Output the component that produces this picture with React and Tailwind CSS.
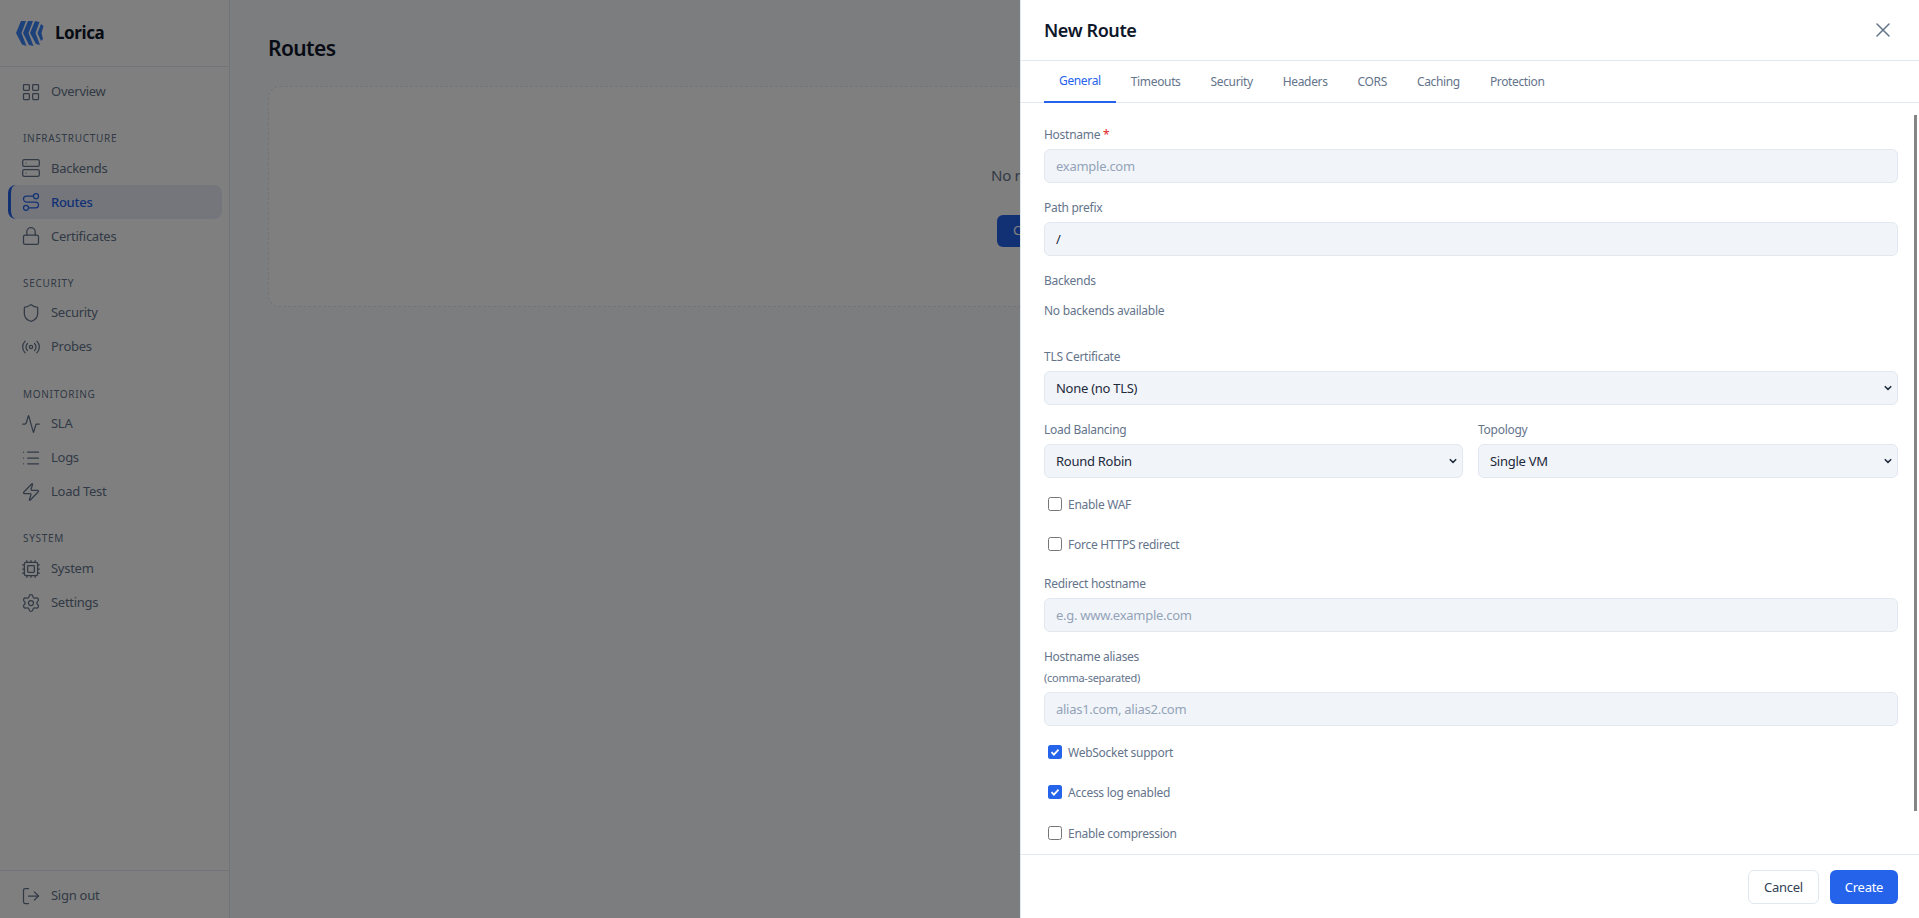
import React from "react";
import { LayoutGrid, Server, Route, Lock, Shield, Radio, Activity, List, Zap, Cpu, Settings, LogOut, X } from "lucide-react";

const F = "font-['Noto_Sans','Open_Sans',sans-serif] tracking-[-0.27px]";

function Logo() {
  return (
    <svg width="28" height="28" viewBox="0 0 28 28" className="shrink-0">
      <g fill="#3b82f6">
        <path d="M5 2L10 2L5.5 14L10.5 27L6 25.5L0 14Z" />
        <path d="M12 2L17 2L12.5 14L17.5 27L13 26L7 14Z" />
        <path d="M19 2L23.5 3L19.5 14L24 26L20 25L14 14Z" />
        <path d="M25 5L27.5 7L25.5 14L27 20L25 22L21.5 14Z" />
      </g>
    </svg>
  );
}

function NavItem({ icon: Icon, label, active }) {
  return (
    <div className={active
      ? "flex h-[34px] items-center gap-[10px] rounded-lg border-l-[3px] border-[#2563eb] bg-[#e8ecf8] pl-[10px] text-[13px] font-medium text-[#2563eb]"
      : "flex h-[34px] items-center gap-[10px] rounded-lg pl-[13px] text-[13px] text-[#64748b]"}>
      <Icon size={20} strokeWidth={1.5} />
      <span>{label}</span>
    </div>
  );
}

function Section({ title, children }) {
  return (
    <div className="mt-[21px]">
      <div className="mb-[3.75px] flex h-[18px] items-center pl-[15px] text-[10px] tracking-[0.07em] text-[#64748b]">{title}</div>
      {children}
    </div>
  );
}

function Label({ children }) {
  return <div className="mb-[5px] h-[18px] text-[12px] leading-[18px] text-[#64748b]">{children}</div>;
}

function TextInput({ placeholder, value }) {
  return (
    <div className={"flex h-[34px] items-center rounded-md border border-[#e2e8f0] bg-[#f1f5f9] pl-[11px] pt-[2px] text-[13px] " + (value ? "text-[#1e293b]" : "text-[#94a3b8]")}>
      {value || placeholder}
    </div>
  );
}

function Select({ value }) {
  return (
    <div className="flex h-[34px] items-center justify-between rounded-md border border-[#e2e8f0] bg-[#f1f5f9] pl-[11px] pr-[5px] text-[13px] text-[#1e293b]">
      <span className="pt-[1px]">{value}</span>
      <svg width="8" height="6" viewBox="0 0 8 6">
        <path d="M0.8 1.2l3.2 3.2 3.2-3.2" fill="none" stroke="#1e293b" strokeWidth="1.5" />
      </svg>
    </div>
  );
}

function Check({ label, checked }) {
  return (
    <div className="flex h-[18px] items-center pl-[4px] text-[12px] text-[#64748b]">
      {checked ? (
        <span className="-mt-[3px] mr-[6px] flex h-[14px] w-[14px] items-center justify-center rounded-[2.5px] bg-[#2563eb]">
          <svg width="10" height="10" viewBox="0 0 10 10"><path d="M1.5 5.2l2.4 2.4 4.6-5" fill="none" stroke="#fff" strokeWidth="1.8" /></svg>
        </span>
      ) : (
        <span className="-mt-[3px] mr-[6px] h-[14px] w-[14px] rounded-[2.5px] border border-[#767676] bg-white" />
      )}
      <span>{label}</span>
    </div>
  );
}

const tabs = ["General", "Timeouts", "Security", "Headers", "CORS", "Caching", "Protection"];

export default function App() {
  return (
    <div className={"relative flex h-screen overflow-hidden bg-[#f8fafc] " + F}>
      <aside className="flex w-[230px] shrink-0 flex-col border-r border-[#e2e8f0] bg-white">
        <div className="flex h-[67px] shrink-0 items-center gap-[11px] border-b border-[#e2e8f0] pl-[16px]">
          <Logo />
          <span className="text-[17px] font-bold tracking-[-0.4px] text-[#0f172a]">Lorica</span>
        </div>
        <nav className="flex-1 pl-[8px] pr-[7px] pt-[7.5px]">
          <NavItem icon={LayoutGrid} label="Overview" />
          <Section title="INFRASTRUCTURE">
            <NavItem icon={Server} label="Backends" />
            <NavItem icon={Route} label="Routes" active />
            <NavItem icon={Lock} label="Certificates" />
          </Section>
          <Section title="SECURITY">
            <NavItem icon={Shield} label="Security" />
            <NavItem icon={Radio} label="Probes" />
          </Section>
          <Section title="MONITORING">
            <NavItem icon={Activity} label="SLA" />
            <NavItem icon={List} label="Logs" />
            <NavItem icon={Zap} label="Load Test" />
          </Section>
          <Section title="SYSTEM">
            <NavItem icon={Cpu} label="System" />
            <NavItem icon={Settings} label="Settings" />
          </Section>
        </nav>
        <div className="h-[48px] shrink-0 border-t border-[#e2e8f0] pl-[8px] pr-[7px] pt-[8px]">
          <NavItem icon={LogOut} label="Sign out" />
        </div>
      </aside>
      <main className="min-w-0 flex-1 px-[38px] pt-[32px]">
        <h1 className="h-[32px] text-[21px] font-semibold leading-[32px] tracking-[-0.6px] text-[#0f172a]">Routes</h1>
        <div className="mt-[22px] flex h-[221px] w-[1619px] flex-col items-center justify-start rounded-xl border border-dashed border-[#e2e8f0] bg-white pt-[77px]">
          <p className="text-[15px] text-[#64748b]">No routes configured yet.</p>
          <button className="mt-[28px] h-[32px] rounded-md bg-[#2563eb] px-[16px] text-[13px] text-white">Create your first route</button>
        </div>
      </main>
      <div className="absolute inset-0 bg-black/50" />
      <div className="absolute bottom-0 right-0 top-0 flex w-[899px] flex-col border-l border-[#e2e8f0] bg-white">
        <div className="flex h-[61px] shrink-0 items-center justify-between border-b border-[#e2e8f0] pl-[23px] pr-[24px]">
          <h2 className="pt-[1px] text-[18px] font-semibold tracking-[-0.4px] text-[#0f172a]">New Route</h2>
          <X size={24} strokeWidth={1.5} className="text-[#64748b]" />
        </div>
        <div className="flex h-[42px] shrink-0 border-b border-[#e2e8f0] pl-[23px] tracking-[-0.35px]">
          {tabs.map((t, i) => (
            <div key={t} className={i === 0
              ? "-mb-px flex h-[42px] items-center border-b-2 border-[#2563eb] px-[15px] text-[12px] text-[#2563eb]"
              : "flex h-[41px] items-center px-[15px] text-[12px] text-[#64748b]"}>{t}</div>
          ))}
        </div>
        <div className="relative min-h-0 flex-1 overflow-hidden">
          <div className="absolute right-[2px] top-[12px] h-[696px] w-[3px] bg-[#858585]" />
          <div className="pl-[23px] pr-[21px] pt-[23px]">
            <Label>Hostname <span className="text-[#dc2626]">*</span></Label>
            <TextInput placeholder="example.com" />
            <div className="mt-[16px]"><Label>Path prefix</Label><TextInput value="/" /></div>
            <div className="mt-[16px]"><Label>Backends</Label></div>
            <div className="mt-[12px] h-[18px] text-[12px] leading-[18px] text-[#64748b]">No backends available</div>
            <div className="mt-[28px]"><Label>TLS Certificate</Label><Select value="None (no TLS)" /></div>
            <div className="mt-[16px] grid grid-cols-[419px_420px] gap-[15px]">
              <div><Label>Load Balancing</Label><Select value="Round Robin" /></div>
              <div><Label>Topology</Label><Select value="Single VM" /></div>
            </div>
            <div className="mt-[18px]"><Check label="Enable WAF" /></div>
            <div className="mt-[22px]"><Check label="Force HTTPS redirect" /></div>
            <div className="mt-[21px]"><Label>Redirect hostname</Label><TextInput placeholder="e.g. www.example.com" /></div>
            <div className="mt-[16px]">
              <div className="h-[18px] text-[12px] leading-[18px] text-[#64748b]">Hostname aliases</div>
              <div className="mb-[7px] mt-[4px] h-[15px] text-[11px] leading-[15px] text-[#64748b]">(comma-separated)</div>
              <TextInput placeholder="alias1.com, alias2.com" />
            </div>
            <div className="mt-[18px]"><Check label="WebSocket support" checked /></div>
            <div className="mt-[22px]"><Check label="Access log enabled" checked /></div>
            <div className="mt-[23px]"><Check label="Enable compression" /></div>
          </div>
        </div>
        <div className="flex h-[64px] shrink-0 items-start justify-end gap-[11px] border-t border-[#e2e8f0] pr-[21px] pt-[15px]">
          <button className="h-[34px] w-[71px] rounded-md border border-[#e2e8f0] bg-white pt-[1px] text-[13px] text-[#334155]">Cancel</button>
          <button className="h-[34px] w-[68px] rounded-md bg-[#2563eb] pt-[1px] text-[13px] text-white">Create</button>
        </div>
      </div>
    </div>
  );
}
